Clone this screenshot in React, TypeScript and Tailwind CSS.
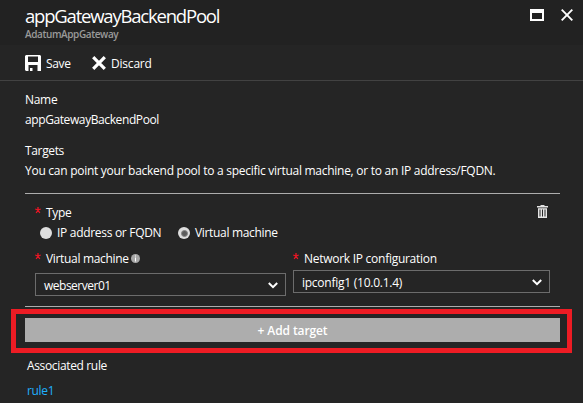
import React from "react";

function Star() {
  return (
    <svg width="6" height="7" viewBox="0 0 6 7" stroke="#e81624" strokeWidth="1.3" fill="none">
      <path d="M3 0v3M3 3L.2 2M3 3L5.8 2M3 3L1.2 6M3 3L4.8 6" />
    </svg>
  );
}

function Chevron() {
  return (
    <svg width="10" height="7" viewBox="0 0 10 7" stroke="#fff" strokeWidth="2" fill="none">
      <path d="M.8 1L5 5.2 9.2 1" />
    </svg>
  );
}

function Radio({ checked = false }: { checked?: boolean }) {
  return (
    <span className="mt-[5px] flex h-3 w-3 items-center justify-center rounded-full bg-[#dedede]">
      {checked && <span className="h-[7px] w-[7px] rounded-full border border-[#858585] bg-[#5c5c5c]" />}
    </span>
  );
}

export default function App() {
  return (
    <div className="h-[403px] w-[583px] overflow-hidden whitespace-nowrap bg-[#252525] font-['Open_Sans','Noto_Sans',sans-serif] text-[12px] leading-[22px] text-white">
      <header className="flex h-[45px] justify-between bg-[#222222] pl-[25px] pr-[10px]">
        <div>
          <h1 className="h-[27px] pt-[1px] text-[18.5px] leading-[29px] tracking-[-1.2px]">appGatewayBackendPool</h1>
          <p className="text-[10px] font-semibold leading-[14px] tracking-[-0.4px] text-[#9a9a9a]">AdatumAppGateway</p>
        </div>
        <div className="flex gap-[17px] pt-[9px]">
          <svg width="14" height="12" viewBox="0 0 14 12" fill="#fff">
            <path fillRule="evenodd" d="M0 0h14v12H0zM2 4v6h10V4z" />
          </svg>
          <svg width="12" height="12" viewBox="0 0 12 12" stroke="#fff" strokeWidth="1.9">
            <path d="M.7.7l10.6 10.6M11.3.7L.7 11.3" />
          </svg>
        </div>
      </header>

      <div className="flex h-9 border-b border-[#424242] pl-[25px] pt-[8px]">
        <svg className="mt-[2px]" width="16" height="16" viewBox="0 0 16 16" fill="#fff">
          <path fillRule="evenodd" d="M1 0h14l1 1v15H1l-1-1V1zM3 1.5V7h10V1.5zM3.5 10v6H5V13h2.5v3h5V10z" />
        </svg>
        <span className="ml-[5px] w-[46px] tracking-[-0.35px]">Save</span>
        <svg className="mt-[3px]" width="14" height="14" viewBox="0 0 14 14" stroke="#fff" strokeWidth="3.2">
          <path d="M1.2 1.2l11.6 11.6M12.8 1.2L1.2 12.8" />
        </svg>
        <span className="ml-[5px] tracking-[-0.2px]">Discard</span>
      </div>

      <main className="pl-[25px] pt-[8px]">
        <div className="h-5 tracking-[-0.3px]">Name</div>
        <div className="h-5 tracking-[-0.4px]">appGatewayBackendPool</div>
        <div className="mt-[11px] h-5 tracking-[-0.35px]">Targets</div>
        <div className="h-5 tracking-[-0.27px]">You can point your backend pool to a specific virtual machine, or to an IP address/FQDN.</div>

        <section className="mt-[13px] h-[114px] w-[535px] border-y border-[#adadad] pl-[10px] pt-[8px]">
          <div className="flex h-[20px]">
            <div className="mt-[5px] w-[11px]"><Star /></div>
            <span className="tracking-[-0.35px]">Type</span>
            <svg className="ml-auto mr-[12px] mt-[3px]" width="11" height="13" viewBox="0 0 11 13" fill="#e4e4e4">
              <path fillRule="evenodd" d="M0 1h3.5V0h4v1H11v1.5H0zM1 3.3h9V13H1zM2.5 4.5v7h1v-7zM5 4.5v7h1v-7zM7.5 4.5v7h1v-7z" />
            </svg>
          </div>
          <div className="flex h-[20px] pl-[5px]">
            <Radio />
            <span className="ml-[5px] w-[121px] tracking-[-0.3px]">IP address or FQDN</span>
            <Radio checked />
            <span className="ml-[5px] tracking-[-0.33px]">Virtual machine</span>
          </div>
          <div className="mt-[6px] flex gap-[7px]">
            <div className="w-[251px]">
              <div className="flex h-[25px]">
                <div className="mt-[5px] w-[11px]"><Star /></div>
                <span className="w-[85px] tracking-[-0.33px]">Virtual machine</span>
                <svg className="mt-[6px]" width="9" height="9" viewBox="0 0 9 9">
                  <circle cx="4.5" cy="4.5" r="4.5" fill="#a8a8a8" />
                  <path d="M4 1.5h1v1H4zM4 3.5h1v4H4z" fill="#fff" />
                </svg>
              </div>
              <div className="flex h-[23px] items-center justify-between border border-[#6c6c6c] pl-[8px] pr-[7px] pt-[2px]">
                <span className="tracking-[-0.5px]">webserver01</span>
                <Chevron />
              </div>
            </div>
            <div className="w-[257px]">
              <div className="flex h-[22px]">
                <div className="mt-[5px] w-[11px]"><Star /></div>
                <span className="tracking-[-0.27px]">Network IP configuration</span>
              </div>
              <div className="flex h-[23px] items-center justify-between border border-[#6c6c6c] pl-[8px] pr-[7px] pt-[2px]">
                <span className="tracking-[-0.25px]">ipconfig1 (10.0.1.4)</span>
                <Chevron />
              </div>
            </div>
          </div>
        </section>

        <div className="-ml-[14px] mt-[2px] h-[44px] w-[561px] border-[5px] border-[#ed1c24] px-[9px] pt-[4px]">
          <button className="block h-[24px] w-[535px] bg-[#adadad] pt-[2px] font-semibold tracking-[-0.1px]">+ Add target</button>
        </div>
        <div className="ml-[2px] mt-[2px] h-5 tracking-[-0.35px]">Associated rule</div>
        <a className="ml-[2px] mt-[5px] block h-5 tracking-[-0.35px] text-[#1fb0ff]">rule1</a>
      </main>
    </div>
  );
}
